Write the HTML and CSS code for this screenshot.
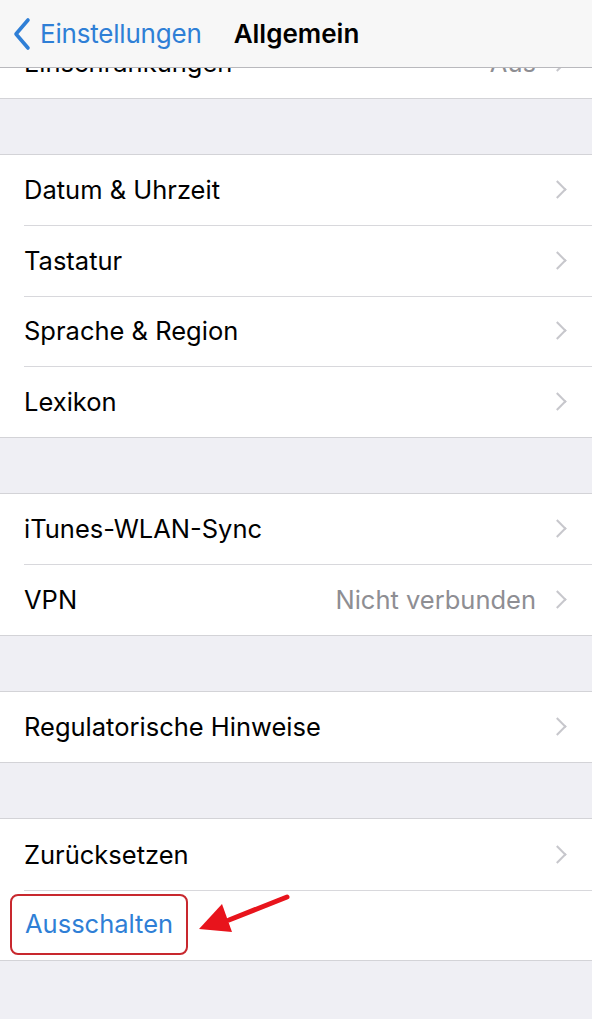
FILE: index.html
```html
<!DOCTYPE html>
<html lang="de">
<head>
    <meta charset="UTF-8">
    <meta name="viewport" content="width=device-width, initial-scale=1.0">
    <title>Allgemein</title>
    <link rel="stylesheet" href="styles.css">
</head>
<body>
    <div class="navbar">
        <a class="back" href="#">
            <svg class="back-icon" width="20" height="34" viewBox="0 0 20 34">
                <path d="M16 3 L4 17 L16 31" fill="none" stroke="#2f7fd6" stroke-width="3.6" stroke-linecap="round" stroke-linejoin="round"/>
            </svg>
            <span>Einstellungen</span>
        </a>
        <div class="title">Allgemein</div>
    </div>

    <div class="content">
        <div class="group first">
            <div class="row">
                <span class="label">Einschränkungen</span>
                <span class="detail">Aus</span>
                <span class="chevron"></span>
            </div>
        </div>

        <div class="group">
            <div class="row"><span class="label">Datum &amp; Uhrzeit</span><span class="chevron"></span></div>
            <div class="row"><span class="label">Tastatur</span><span class="chevron"></span></div>
            <div class="row"><span class="label">Sprache &amp; Region</span><span class="chevron"></span></div>
            <div class="row"><span class="label">Lexikon</span><span class="chevron"></span></div>
        </div>

        <div class="group">
            <div class="row"><span class="label">iTunes-WLAN-Sync</span><span class="chevron"></span></div>
            <div class="row"><span class="label">VPN</span><span class="detail">Nicht verbunden</span><span class="chevron"></span></div>
        </div>

        <div class="group">
            <div class="row"><span class="label">Regulatorische Hinweise</span><span class="chevron"></span></div>
        </div>

        <div class="group">
            <div class="row"><span class="label">Zurücksetzen</span><span class="chevron"></span></div>
            <div class="row action">
                <span class="label highlight">Ausschalten</span>
                <svg class="arrow" width="100" height="50" viewBox="0 0 100 50">
                    <line x1="88" y1="4" x2="30" y2="27" stroke="#e8141c" stroke-width="5" stroke-linecap="round"/>
                    <polygon points="0,36 23,11 33,39" fill="#e8141c"/>
                </svg>
            </div>
        </div>
    </div>
</body>
</html>
```

FILE: styles.css
```css
body {
    margin: 0;
    padding: 0;
    width: 592px;
    height: 1019px;
    overflow: hidden;
    background-color: #efeff4;
    font-family: Inter, "Noto Sans", Arial, sans-serif;
    position: relative;
}

.navbar {
    position: absolute;
    top: 0;
    left: 0;
    right: 0;
    height: 67px;
    background-color: #f7f7f7;
    border-bottom: 1px solid #b9b9bd;
    display: flex;
    align-items: center;
    z-index: 2;
}

.back {
    display: flex;
    align-items: center;
    text-decoration: none;
    color: #2f7fd6;
    font-size: 26px;
    margin-left: 12px;
    letter-spacing: -0.2px;
}

.back-icon {
    margin-right: 8px;
}

.title {
    margin-left: 32px;
    font-size: 26px;
    font-weight: 600;
    color: #000;
}

.content {
    padding-top: 27px;
}

.group {
    background-color: #fff;
    border-top: 1px solid #d3d3d7;
    border-bottom: 1px solid #d3d3d7;
    margin-bottom: 55px;
}

.group.first {
    border-top: none;
}

.row {
    height: 70.5px;
    display: flex;
    align-items: center;
    padding-left: 24px;
    padding-right: 24px;
    position: relative;
}

.row + .row::before {
    content: "";
    position: absolute;
    top: 0;
    left: 24px;
    right: 0;
    border-top: 1px solid #d8d8dc;
}

.label {
    flex: 1;
    font-size: 25.5px;
    color: #000;
}

.detail {
    font-size: 25.5px;
    color: #8e8e93;
    margin-right: 15px;
}

.chevron {
    width: 11px;
    height: 11px;
    border-top: 2.5px solid #c7c7cc;
    border-right: 2.5px solid #c7c7cc;
    transform: rotate(45deg);
    margin-right: 4px;
}

.action .label {
    flex: none;
}

.highlight {
    color: #2f7fd6;
    border: 2px solid #c8282e;
    border-radius: 8px;
    padding: 12px 13px 14px 13px;
    margin-left: -14px;
}

.arrow {
    position: absolute;
    left: 199px;
    top: 3px;
}
```
